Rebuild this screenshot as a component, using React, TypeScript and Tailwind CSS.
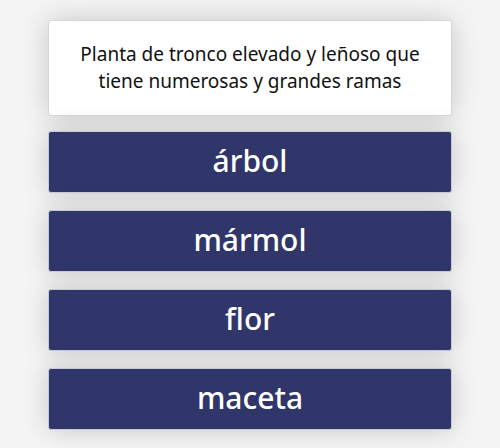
const options = ['árbol', 'mármol', 'flor', 'maceta']

export default function App() {
  return (
    <div className="min-h-[448px] w-[500px] bg-[#f4f4f4] font-['Noto_Sans',sans-serif] overflow-hidden">
      <div className="mx-auto w-[404px] pt-5">
        <div className="flex h-[96px] items-center justify-center rounded-[3px] border border-[#d6d6d6] bg-white px-6 text-center text-[19px] leading-[27px] text-[#111] shadow-[0_0_28px_rgba(0,0,0,0.18)]">
          Planta de tronco elevado y leñoso que tiene numerosas y grandes ramas
        </div>
        <div className="mt-[15px] flex flex-col gap-[17px]">
          {options.map((o) => (
            <button
              key={o}
              className="flex h-[62px] items-center justify-center rounded-[3px] border border-[#c9cbd6] bg-[#30356a] pb-1 text-[30px] font-medium text-white shadow-[0_0_26px_rgba(0,0,0,0.18)]"
            >
              {o}
            </button>
          ))}
        </div>
      </div>
    </div>
  )
}
